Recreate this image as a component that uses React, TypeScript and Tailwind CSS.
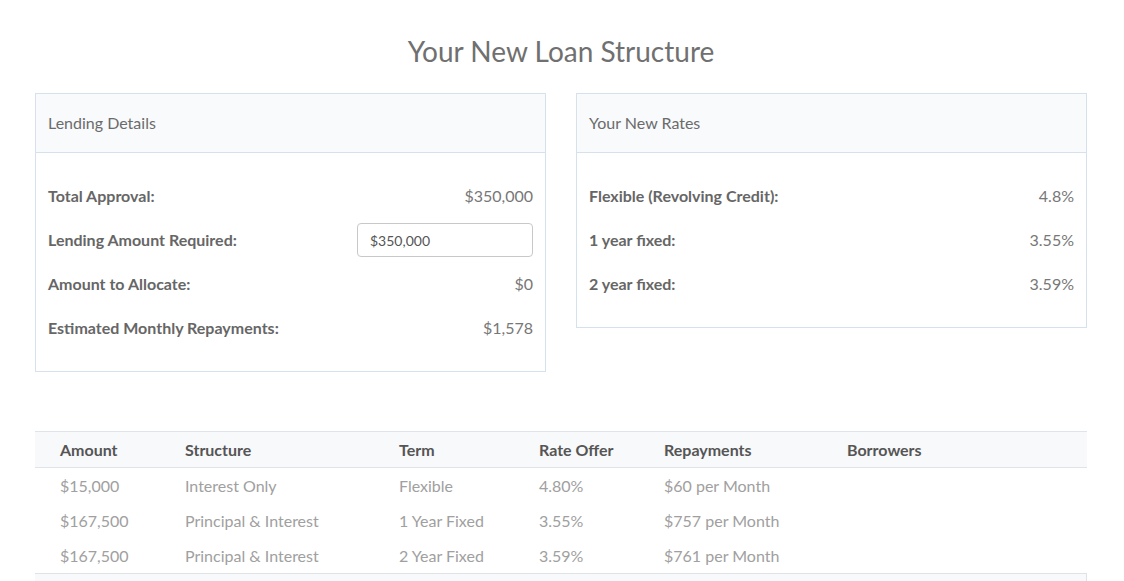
import React from 'react';

const font = { fontFamily: 'Lato, "Noto Sans", sans-serif' };

interface Row {
  label: string;
  value?: string;
  input?: boolean;
}

const lending: Row[] = [
  { label: 'Total Approval:', value: '$350,000' },
  { label: 'Lending Amount Required:', input: true },
  { label: 'Amount to Allocate:', value: '$0' },
  { label: 'Estimated Monthly Repayments:', value: '$1,578' },
];

const rates: Row[] = [
  { label: 'Flexible (Revolving Credit):', value: '4.8%' },
  { label: '1 year fixed:', value: '3.55%' },
  { label: '2 year fixed:', value: '3.59%' },
];

const loans = [
  { amount: '$15,000', structure: 'Interest Only', term: 'Flexible', rate: '4.80%', repay: '$60 per Month' },
  { amount: '$167,500', structure: 'Principal & Interest', term: '1 Year Fixed', rate: '3.55%', repay: '$757 per Month' },
  { amount: '$167,500', structure: 'Principal & Interest', term: '2 Year Fixed', rate: '3.59%', repay: '$761 per Month' },
];

const Card: React.FC<{ title: string; rows: Row[] }> = ({ title, rows }) => (
  <div className="border border-[#d5e2ee] bg-white">
    <div className="h-[59px] flex items-center px-3 bg-[#f8fafc] border-b border-[#d5e2ee] text-[16px] text-[#6b6b6b]">
      {title}
    </div>
    <div className="pt-[21px] pb-[21px] px-3">
      {rows.map((r) => (
        <div key={r.label} className="h-[44px] flex items-center justify-between text-[16px]">
          <span className="font-bold text-[#666]">{r.label}</span>
          {r.input ? (
            <input
              defaultValue="$350,000"
              className="w-[176px] h-[34px] border border-[#c8c8c8] rounded-[4px] px-3 text-[14px] text-[#555] outline-none"
              style={font}
            />
          ) : (
            <span className="text-[#777]">{r.value}</span>
          )}
        </div>
      ))}
    </div>
  </div>
);

export default function App() {
  return (
    <div className="min-h-screen bg-white" style={font}>
      <div className="w-[1052px] ml-[35px]">
        <h1 className="pt-[32px] h-[93px] text-center text-[28px] leading-[38px] text-[#707070]">
          Your New Loan Structure
        </h1>
        <div className="grid grid-cols-2 gap-[30px] items-start">
          <Card title="Lending Details" rows={lending} />
          <Card title="Your New Rates" rows={rates} />
        </div>
        <div className="mt-[59px]">
          <div className="grid grid-cols-[125px_214px_140px_125px_183px_1fr] h-[37px] items-center pl-[25px] bg-[#f8f9fb] border-t border-b border-[#dfe4ea] text-[16px] font-bold text-[#555]">
            <span>Amount</span>
            <span>Structure</span>
            <span>Term</span>
            <span>Rate Offer</span>
            <span>Repayments</span>
            <span>Borrowers</span>
          </div>
          {loans.map((l, i) => (
            <div
              key={i}
              className="grid grid-cols-[125px_214px_140px_125px_183px_1fr] h-[35px] items-center pl-[25px] text-[16px] text-[#a0a0a0]"
            >
              <span>{l.amount}</span>
              <span>{l.structure}</span>
              <span>{l.term}</span>
              <span>{l.rate}</span>
              <span>{l.repay}</span>
              <span></span>
            </div>
          ))}
          <div className="h-[40px] bg-[#f8f9fa] border-t border-r border-[#dfe3e7]"></div>
        </div>
      </div>
    </div>
  );
}
